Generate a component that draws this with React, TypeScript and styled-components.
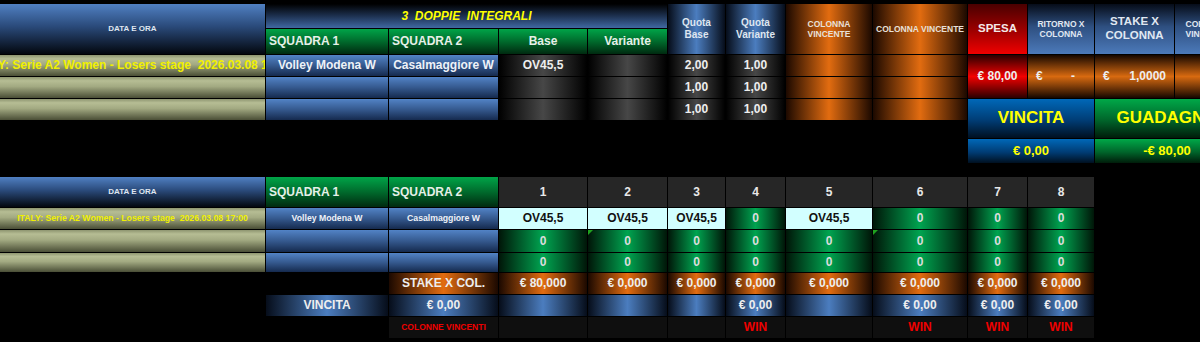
import React from 'react'
import styled, { createGlobalStyle } from 'styled-components'

const GlobalStyle = createGlobalStyle`
  html, body {
    margin: 0;
    background: #000;
    overflow: hidden;
  }
  body {
    font-family: "Liberation Sans", Arial, sans-serif;
  }
`

// column tracks, 1px gap between them (same sheet columns in both blocks)
const TRACKS = [265, 122, 109, 88, 79, 57, 59, 86, 94, 59, 66, 79, 64]

const tube = (edge: string, mid: string) =>
  `linear-gradient(to right, ${edge} 0%, ${mid} 50%, ${edge} 100%)`
const band = (edge: string, mid: string) =>
  `linear-gradient(to bottom, ${edge} 0%, ${mid} 50%, ${edge} 100%)`

const Sheet = styled.div`
  display: flex;
  flex-direction: column;
  gap: 14px;
  width: 1260px;
`

const Block = styled.div<{ $cols: number; $rows: string; $top?: number }>`
  display: grid;
  grid-template-columns: ${p => TRACKS.slice(0, p.$cols).map(w => w + 'px').join(' ')};
  grid-template-rows: ${p => p.$rows};
  gap: 1px;
  padding-top: ${p => p.$top ?? 0}px;
  background: #000;
`

type CellProps = {
  $c?: string
  $r?: string
  $size?: number
  $color?: string
  $left?: boolean
  $italic?: boolean
  $note?: boolean
}

const Cell = styled.div<CellProps>`
  position: relative;
  grid-column: ${p => p.$c ?? 'auto'};
  grid-row: ${p => p.$r ?? 'auto'};
  display: flex;
  align-items: center;
  justify-content: ${p => (p.$left ? 'flex-start' : 'center')};
  padding-left: ${p => (p.$left ? '3px' : '0')};
  min-width: 0;
  overflow: hidden;
  white-space: pre;
  text-align: center;
  line-height: 1.2;
  font-weight: bold;
  font-style: ${p => (p.$italic ? 'italic' : 'normal')};
  font-size: ${p => p.$size ?? 12}px;
  color: ${p => p.$color ?? '#eeeeee'};

  &::before {
    content: '';
    display: ${p => (p.$note ? 'block' : 'none')};
    position: absolute;
    left: 0;
    top: 0;
    border-top: 5px solid #1fa31f;
    border-right: 5px solid transparent;
  }
`

const HeadBlue = styled(Cell)`
  background: linear-gradient(to bottom, #5080c2 0%, #2a4a7a 45%, #03070e 100%);
  color: #dfe6f0;
`

const Banner = styled(Cell)`
  background: linear-gradient(to bottom, #000000 0%, #1a2c48 45%, #4068a2 100%);
  color: #ffff00;
`

const HeadGreen = styled(Cell)`
  background: linear-gradient(to bottom, #00a448 0%, #006a2c 50%, #002a10 100%);
  color: #e6f0e8;
`

const HeadSky = styled(Cell)`
  background: linear-gradient(to bottom, #060c18 0%, #2e4f80 45%, #4c7aba 100%);
  color: #e0e8f2;
`

const Spesa = styled(Cell)`
  background: linear-gradient(to bottom, #4a0000 0%, #a00000 55%, #f00000 100%);
  color: #f4e8e8;
`

const Olive = styled(Cell)`
  background: linear-gradient(to bottom, #8e9570 0%, #b6bd94 18%, #a3aa82 45%, #4a4e36 100%);
  color: #f0f000;
`

const BlueCell = styled(Cell)`
  background: linear-gradient(to bottom, #5283c6 0%, #35598e 50%, #152a4e 100%);
  color: #eef2f8;
`

const DarkTube = styled(Cell)`
  background: ${tube('#000000', '#474747')};
`

const BlueTube = styled(Cell)`
  background: ${tube('#060d1a', '#4b7dbf')};
`

const OrangeTube = styled(Cell)`
  background: ${tube('#1c0900', '#e26c10')};
`

const GreenTube = styled(Cell)`
  background: ${tube('#001608', '#00a450')};
  color: #dcdcdc;
`

const RedBand = styled(Cell)`
  background: ${band('#2a0000', '#f20000')};
`

const OrangeBand = styled(Cell)`
  background: ${band('#150700', '#d86a10')};
  justify-content: space-between;
  padding: 0 ${p => (p.$left ? 19 : 8)}px 0 8px;
`

const WinHead = styled(Cell)`
  background: linear-gradient(to bottom, #0068b8 0%, #003c74 55%, #001020 100%);
  color: #ffff00;
`

const GainHead = styled(Cell)`
  background: linear-gradient(to bottom, #00a848 0%, #00642a 55%, #001c0a 100%);
  color: #ffff00;
`

const NumHead = styled(Cell)`
  background: #262626;
  color: #e8e8e8;
`

const Cyan = styled(Cell)`
  background: #d2ffff;
  color: #111111;
`

const Dim = styled(Cell)`
  background: #0f0f0f;
  color: #ee0000;
`

const Blank = styled.div`
  background: #000;
`

const topRows = '24px 25px 21px 21px 21px 17px 24px'
const bottomRows = '30px 21px 22px 19px 21px 21px 21px'

const picks = ['OV45,5', 'OV45,5', 'OV45,5', '0', 'OV45,5', '0', '0', '0']
const vincita = ['', '', '', '€ 0,00', '', '€ 0,00', '€ 0,00', '€ 0,00']
const wins = ['', '', '', 'WIN', '', 'WIN', 'WIN', 'WIN']

function TopBlock(): JSX.Element {
  const quote = [['2,00', '1,00'], ['1,00', '1,00'], ['1,00', '1,00']]
  return (
    <Block $cols={13} $rows={topRows} $top={4}>
      <HeadBlue $c="1" $r="1 / span 2" $size={8}>DATA E ORA</HeadBlue>
      <Banner $c="2 / span 4" $r="1" $italic>3  DOPPIE  INTEGRALI</Banner>
      <HeadGreen $c="2" $r="2" $left>SQUADRA 1</HeadGreen>
      <HeadGreen $c="3" $r="2" $left>SQUADRA 2</HeadGreen>
      <HeadGreen $c="4" $r="2">Base</HeadGreen>
      <HeadGreen $c="5" $r="2">Variante</HeadGreen>
      <BlueTube $c="6" $r="1 / span 2" $size={10} $color="#dfe6f0">{'Quota\nBase'}</BlueTube>
      <BlueTube $c="7" $r="1 / span 2" $size={10} $color="#dfe6f0">{'Quota\nVariante'}</BlueTube>
      <OrangeTube $c="8" $r="1 / span 2" $size={8.5} $color="#e8e0d8">{'COLONNA\nVINCENTE'}</OrangeTube>
      <OrangeTube $c="9" $r="1 / span 2" $size={8.5} $color="#e8e0d8">COLONNA VINCENTE</OrangeTube>

      <Spesa $c="10" $r="1 / span 2" $size={11.5}>SPESA</Spesa>
      <HeadSky $c="11" $r="1 / span 2" $size={8.5}>{'RITORNO X\nCOLONNA'}</HeadSky>
      <HeadSky $c="12" $r="1 / span 2" $size={11.5}>{'STAKE X\nCOLONNA'}</HeadSky>
      <HeadSky $c="13" $r="1 / span 2" $size={8.5}>{'COLONNA\nVINCENTE'}</HeadSky>

      {quote.map((q, i) => (
        <React.Fragment key={i}>
          <Olive $c="1" $r={String(i + 3)}>
            {i === 0 ? 'ITALY: Serie A2 Women - Losers stage  2026.03.08 17:00' : ''}
          </Olive>
          <BlueCell $c="2" $r={String(i + 3)}>{i === 0 ? 'Volley Modena W' : ''}</BlueCell>
          <BlueCell $c="3" $r={String(i + 3)}>{i === 0 ? 'Casalmaggiore W' : ''}</BlueCell>
          <DarkTube $c="4" $r={String(i + 3)}>{i === 0 ? 'OV45,5' : ''}</DarkTube>
          <DarkTube $c="5" $r={String(i + 3)} />
          <DarkTube $c="6" $r={String(i + 3)}>{q[0]}</DarkTube>
          <DarkTube $c="7" $r={String(i + 3)}>{q[1]}</DarkTube>
          <OrangeTube $c="8" $r={String(i + 3)} />
          <OrangeTube $c="9" $r={String(i + 3)} />
        </React.Fragment>
      ))}

      <RedBand $c="10" $r="3 / span 2">€ 80,00</RedBand>
      <OrangeBand $c="11" $r="3 / span 2" $left><span>€</span><span>-</span></OrangeBand>
      <OrangeBand $c="12" $r="3 / span 2"><span>€</span><span>1,0000</span></OrangeBand>
      <OrangeBand $c="13" $r="3 / span 2" />

      <WinHead $c="10 / span 2" $r="5 / span 2" $size={17}>VINCITA</WinHead>
      <GainHead $c="12 / span 2" $r="5 / span 2" $size={17}>GUADAGNO</GainHead>
      <WinHead $c="10 / span 2" $r="7" $size={13}>€ 0,00</WinHead>
      <GainHead $c="12 / span 2" $r="7" $size={13}>-€ 80,00</GainHead>
    </Block>
  )
}

function BottomBlock(): JSX.Element {
  return (
    <Block $cols={11} $rows={bottomRows}>
      <HeadBlue $size={8}>DATA E ORA</HeadBlue>
      <HeadGreen $left>SQUADRA 1</HeadGreen>
      <HeadGreen $left>SQUADRA 2</HeadGreen>
      {picks.map((_, i) => (
        <NumHead key={'h' + i}>{i + 1}</NumHead>
      ))}

      {[0, 1, 2].map(r => (
        <React.Fragment key={'r' + r}>
          <Olive $size={8.7}>{r === 0 ? 'ITALY: Serie A2 Women - Losers stage  2026.03.08 17:00' : ''}</Olive>
          <BlueCell $size={8.7}>{r === 0 ? 'Volley Modena W' : ''}</BlueCell>
          <BlueCell $size={8.7}>{r === 0 ? 'Casalmaggiore W' : ''}</BlueCell>
          {picks.map((p, i) =>
            r === 0 && p !== '0' ? (
              <Cyan key={i}>{p}</Cyan>
            ) : (
              <GreenTube key={i} $note={r === 1 && (i === 1 || i === 5)}>0</GreenTube>
            )
          )}
        </React.Fragment>
      ))}

      <Blank />
      <Blank />
      <OrangeTube>STAKE X COL.</OrangeTube>
      {picks.map((_, i) => (
        <OrangeTube key={'s' + i}>{i === 0 ? '€ 80,000' : '€ 0,000'}</OrangeTube>
      ))}

      <Blank />
      <BlueTube>VINCITA</BlueTube>
      <BlueTube>€ 0,00</BlueTube>
      {vincita.map((v, i) => (
        <BlueTube key={'v' + i}>{v}</BlueTube>
      ))}

      <Blank />
      <Blank />
      <Dim $size={8.5}>COLONNE VINCENTI</Dim>
      {wins.map((w, i) => (
        <Dim key={'w' + i}>{w}</Dim>
      ))}
    </Block>
  )
}

export default function App(): JSX.Element {
  return (
    <>
      <GlobalStyle />
      <Sheet>
        <TopBlock />
        <BottomBlock />
      </Sheet>
    </>
  )
}
